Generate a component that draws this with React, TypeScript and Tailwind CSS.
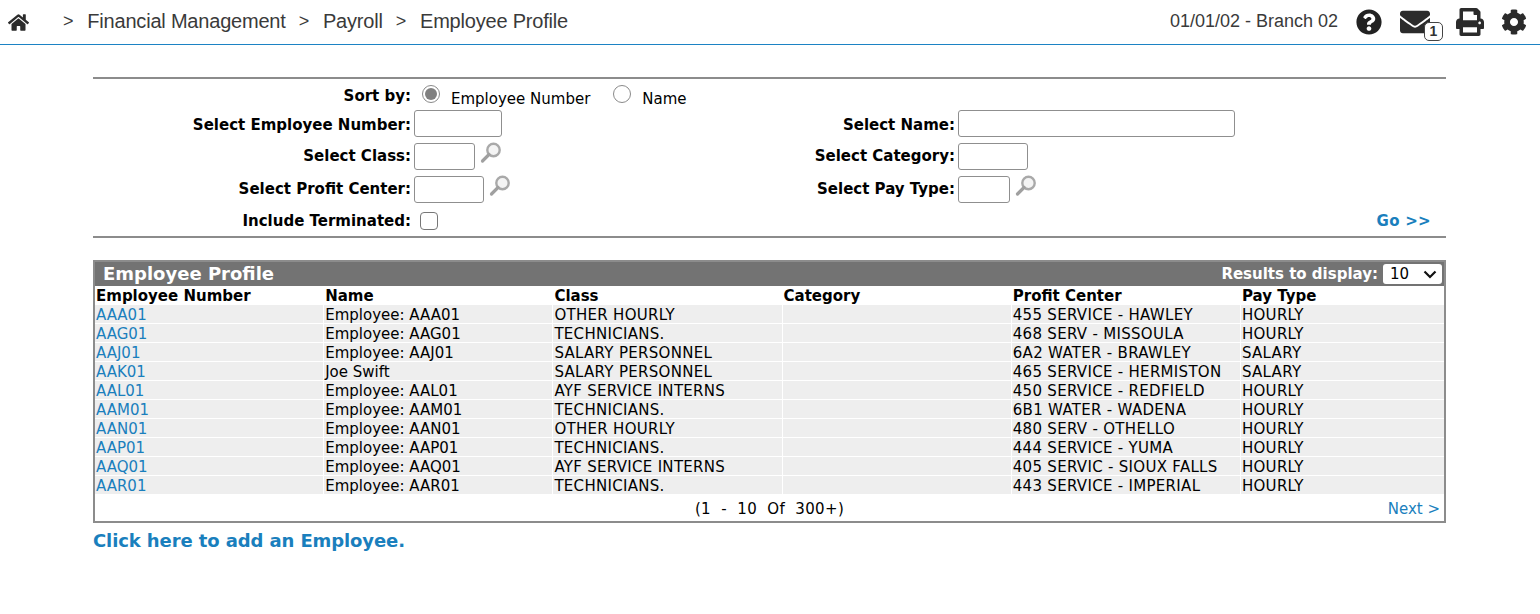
import { FaHome, FaQuestionCircle, FaEnvelope, FaPrint, FaCog } from "react-icons/fa";

const rows = [
  ["AAA01", "Employee: AAA01", "OTHER HOURLY", "455 SERVICE - HAWLEY", "HOURLY"],
  ["AAG01", "Employee: AAG01", "TECHNICIANS.", "468 SERV - MISSOULA", "HOURLY"],
  ["AAJ01", "Employee: AAJ01", "SALARY PERSONNEL", "6A2 WATER - BRAWLEY", "SALARY"],
  ["AAK01", "Joe Swift", "SALARY PERSONNEL", "465 SERVICE - HERMISTON", "SALARY"],
  ["AAL01", "Employee: AAL01", "AYF SERVICE INTERNS", "450 SERVICE - REDFIELD", "HOURLY"],
  ["AAM01", "Employee: AAM01", "TECHNICIANS.", "6B1 WATER - WADENA", "HOURLY"],
  ["AAN01", "Employee: AAN01", "OTHER HOURLY", "480 SERV - OTHELLO", "HOURLY"],
  ["AAP01", "Employee: AAP01", "TECHNICIANS.", "444 SERVICE - YUMA", "HOURLY"],
  ["AAQ01", "Employee: AAQ01", "AYF SERVICE INTERNS", "405 SERVIC - SIOUX FALLS", "HOURLY"],
  ["AAR01", "Employee: AAR01", "TECHNICIANS.", "443 SERVICE - IMPERIAL", "HOURLY"],
];

const headers = ["Employee Number", "Name", "Class", "Category", "Profit Center", "Pay Type"];

function Magnifier() {
  return (
    <svg width="22" height="22" viewBox="0 0 22 22" className="shrink-0 -mt-px">
      <circle cx="13.5" cy="8" r="6.2" fill="#f4f4f4" stroke="#a9a9a9" strokeWidth="2.4" />
      <path d="M9 12.5 L2.5 19" stroke="#a0a0a0" strokeWidth="3.2" strokeLinecap="round" />
    </svg>
  );
}

function Label({ children }: { children: React.ReactNode }) {
  return <div className="text-right font-bold pr-[3px] text-black">{children}</div>;
}

function TextBox({ w }: { w: string }) {
  return <div className={`${w} h-[27px] border border-[#8f8f8f] rounded-[3px] bg-white shrink-0`} />;
}

function Radio({ on }: { on?: boolean }) {
  return (
    <span className="w-[18px] h-[18px] rounded-full border border-[#8a8a8a] bg-white flex items-center justify-center shrink-0">
      {on && <span className="w-[12px] h-[12px] rounded-full bg-[#808080]" />}
    </span>
  );
}

export default function App() {
  return (
    <div className="w-[1540px] h-[614px] bg-white overflow-hidden text-[15px] leading-[19px] text-black font-['DejaVu_Sans','Verdana',sans-serif]">
      <header className="h-[45px] border-b border-[#1c83c4] flex items-center text-[#3a3a3a] font-['Liberation_Sans',Arial,sans-serif]">
        <FaHome className="ml-[8px] w-[21px] h-[21px] text-[#2b2b2b]" />
        <nav className="flex items-center text-[20px] tracking-[-0.2px] ml-[34px] mt-[-2px]">
          <span className="text-[18px] mr-[14px]">&gt;</span>
          <span>Financial Management</span>
          <span className="text-[18px] ml-[13px] mr-[14px]">&gt;</span>
          <span>Payroll</span>
          <span className="text-[18px] ml-[13px] mr-[14px]">&gt;</span>
          <span>Employee Profile</span>
        </nav>
        <div className="ml-auto flex items-center">
          <span className="text-[18px] mr-[18px] mt-[-2px]">01/01/02 - Branch 02</span>
          <FaQuestionCircle className="w-[26px] h-[26px] text-[#222] mr-[18px]" />
          <div className="relative w-[32px] h-[30px] mr-[24px] flex items-center">
            <FaEnvelope className="w-[30px] h-[30px] text-[#2b2b2b]" />
            <span className="absolute left-[24px] top-[15px] w-[19px] h-[19px] rounded-[5px] border border-[#444] bg-white text-[#333] text-[14px] leading-[17px] font-bold text-center">1</span>
          </div>
          <FaPrint className="w-[28px] h-[28px] text-[#2b2b2b] mr-[17px]" />
          <FaCog className="w-[26px] h-[26px] text-[#2b2b2b] mr-[13px]" />
        </div>
      </header>

      <main className="ml-[93px] w-[1353px] pt-[32px]">
        <section className="border-y-2 border-[#8c8c8c] h-[161px] flex flex-col">
          <div className="grid grid-cols-[321px_230px_314px_1fr] items-center h-[28px] shrink-0">
            <Label><span className="relative top-[3px]">Sort by:</span></Label>
            <div className="col-span-3 flex items-center">
              <span className="ml-[8px] relative top-[1px]"><Radio on /></span>
              <span className="ml-[11px] mr-[23px] relative top-[6px]">Employee Number</span>
              <span className="relative top-[1px]"><Radio /></span>
              <span className="ml-[11px] relative top-[6px]">Name</span>
            </div>
          </div>
          <div className="grid grid-cols-[321px_230px_314px_1fr] items-center h-[33px] shrink-0">
            <Label><span className="relative top-[2px]">Select Employee Number:</span></Label>
            <TextBox w="w-[88px]" />
            <Label><span className="relative top-[2px]">Select Name:</span></Label>
            <TextBox w="w-[277px]" />
          </div>
          <div className="grid grid-cols-[321px_230px_314px_1fr] items-center h-[33px] shrink-0">
            <Label>Select Class:</Label>
            <div className="flex items-start gap-[5px]">
              <TextBox w="w-[61px]" />
              <Magnifier />
            </div>
            <Label>Select Category:</Label>
            <TextBox w="w-[70px]" />
          </div>
          <div className="grid grid-cols-[321px_230px_314px_1fr] items-center h-[33px] shrink-0">
            <Label>Select Profit Center:</Label>
            <div className="flex items-start gap-[5px]">
              <TextBox w="w-[70px]" />
              <Magnifier />
            </div>
            <Label>Select Pay Type:</Label>
            <div className="flex items-start gap-[5px]">
              <TextBox w="w-[52px]" />
              <Magnifier />
            </div>
          </div>
          <div className="grid grid-cols-[321px_1fr] items-center h-[30px] shrink-0">
            <Label>Include Terminated:</Label>
            <div className="flex items-center justify-between pr-[15px]">
              <span className="ml-[6px] w-[18px] h-[18px] rounded-[4px] border border-[#777] bg-white" />
              <a className="font-bold text-[#1a7fbd] tracking-[0.3px]">Go &gt;&gt;</a>
            </div>
          </div>
        </section>

        <section className="mt-[22px] border-2 border-[#8c8c8c] h-[263px] flex flex-col">
          <div className="h-[24px] bg-[#737373] flex items-center justify-between text-white font-bold shrink-0">
            <span className="ml-[8px] text-[18px] relative top-[-1px]">Employee Profile</span>
            <div className="flex items-center">
              <span>Results to display:</span>
              <span className="ml-[5px] mr-[2px] w-[59px] h-[20px] bg-white rounded-[3px] text-black font-normal flex items-center justify-between pl-[7px] pr-[5px]">
                10
                <svg width="14" height="9" viewBox="0 0 14 9"><path d="M1.5 1.5 L7 7 L12.5 1.5" fill="none" stroke="#111" strokeWidth="2.2" /></svg>
              </span>
            </div>
          </div>
          <div className="grid grid-cols-[229.2px_229.2px_229.2px_229.2px_229.2px_1fr] h-[19px] leading-[21px] font-bold shrink-0">
            {headers.map((h) => (
              <div key={h} className="pl-px">{h}</div>
            ))}
          </div>
          {rows.map((r) => (
            <div key={r[0]} className="grid grid-cols-[229.2px_229.2px_229.2px_229.2px_229.2px_1fr] h-[19px] shrink-0 border-b border-white">
              <div className="pl-px bg-[#eeeeee] border-r border-white h-[18px] leading-[20px] text-[#1a7fbd]">{r[0]}</div>
              <div className="pl-px bg-[#eeeeee] border-r border-white h-[18px] leading-[20px]">{r[1]}</div>
              <div className="pl-px bg-[#eeeeee] border-r border-white h-[18px] leading-[20px] tracking-[0.3px]">{r[2]}</div>
              <div className="pl-px bg-[#eeeeee] border-r border-white h-[18px] leading-[20px]" />
              <div className="pl-px bg-[#eeeeee] border-r border-white h-[18px] leading-[20px] tracking-[0.3px]">{r[3]}</div>
              <div className="pl-px bg-[#eeeeee] h-[18px] leading-[20px] tracking-[0.3px]">{r[4]}</div>
            </div>
          ))}
          <div className="relative flex-1 flex items-center justify-center">
            <span className="whitespace-pre tracking-[0.35px] relative top-[1px]">(1  -  10  Of  300+)</span>
            <a className="absolute right-[4px] top-[5px] text-[#1a7fbd]">Next &gt;</a>
          </div>
        </section>

        <a className="block mt-[7px] text-[18px] tracking-[-0.1px] leading-[22px] font-bold text-[#1a7fbd]">Click here to add an Employee.</a>
      </main>
    </div>
  );
}
